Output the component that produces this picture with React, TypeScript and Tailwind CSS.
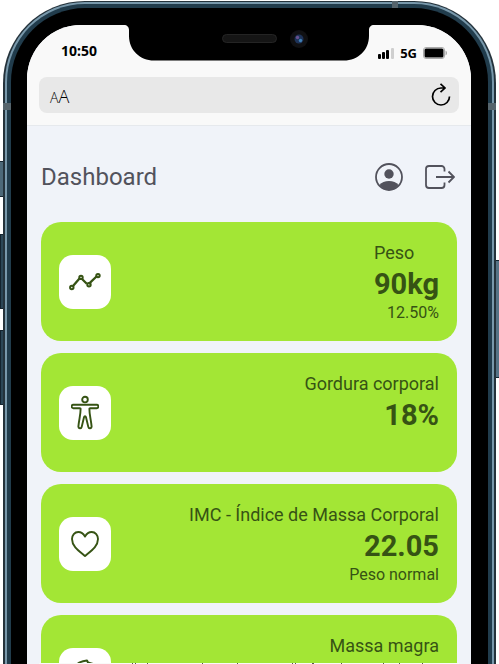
import type { ReactNode } from "react";

type Metric = { label: string; value: string; note?: string; icon: ReactNode };

const TrendIcon = () => (
  <svg viewBox="0 0 32 32" className="size-8" fill="none" stroke="currentColor" strokeWidth="2" aria-hidden="true">
    <path d="M4 20 10.500 12.500M12.500 12.500 17.800 17.800M19.800 17.800 28 10" strokeWidth="2.300" />
    <circle cx="2.800" cy="21.500" r="1.700" />
    <circle cx="12" cy="11.400" r="1.700" />
    <circle cx="20" cy="18.800" r="1.700" />
    <circle cx="29" cy="9.600" r="1.700" />
  </svg>
);

const BodyIcon = () => (
  <svg viewBox="0 0 28 36" className="h-9 w-7" fill="none" stroke="currentColor" strokeWidth="1.900" strokeLinejoin="round" aria-hidden="true">
    <circle cx="14" cy="4.600" r="2.800" />
    <path d="M2.300 9.800H25.700a1.600 1.600 0 0 1 0 3.400H19.200a.8.8 0 0 0-.8.9c0 6 1.500 10 2.200 17.200.2 2.400-2.900 2.700-3.300.6L15 22.300c-.4-1.600-1.600-1.600-2 0L10.700 31.900c-.4 2.100-3.500 1.800-3.300-.6C8.100 24.100 9.600 20.100 9.600 14.100a.8.8 0 0 0-.8-.9H2.300a1.600 1.600 0 0 1 0-3.400Z" />
  </svg>
);

const HeartIcon = () => (
  <svg viewBox="0 0 28 26" className="h-[26px] w-7" fill="none" stroke="currentColor" strokeWidth="1.900" strokeLinejoin="round" aria-hidden="true">
    <path d="M14 5.600C12.300 2.500 10 1 7.300 1 3.600 1 1 4.200 1 8c0 7.500 7 12 13 17 6-5 13-9.500 13-17 0-3.800-2.600-7-6.300-7C18 1 15.700 2.500 14 5.600Z" />
  </svg>
);

const MuscleIcon = () => (
  <svg viewBox="0 0 28 32" className="h-8 w-7" fill="none" stroke="currentColor" strokeWidth="2" strokeLinejoin="round" aria-hidden="true">
    <path d="M3 9C5 5 8 3 12 2.200L16 1.500 17 3.500 22 5 20 8 14 8l-1 5c8-3 15 1 14 8-1 8-14 9-22 5C2 21 1 15 3 9Z" />
  </svg>
);

const metrics: Metric[] = [
  { label: "Peso", value: "90kg", note: "12.50%", icon: <TrendIcon /> },
  { label: "Gordura corporal", value: "18%", icon: <BodyIcon /> },
  { label: "IMC - Índice de Massa Corporal", value: "22.05", note: "Peso normal", icon: <HeartIcon /> },
  { label: "Massa magra", value: "", icon: <MuscleIcon /> },
];

function MetricCard({ label, value, note, icon }: Metric) {
  return (
    <article className="flex h-[119px] shrink-0 justify-between rounded-[20px] bg-[#a3e635] px-[18px] text-[#365314]">
      <div className="flex h-[54px] w-[52px] items-center justify-center self-center rounded-[14px] bg-white">{icon}</div>
      <div className="flex flex-col pt-[19px]">
        <h2 className="text-lg leading-6">{label}</h2>
        <p className="text-right text-[29px] leading-[38px] font-bold">{value}</p>
        <p className="text-right text-base leading-5">{note}</p>
      </div>
    </article>
  );
}

function StatusBar() {
  return (
    <div className="flex h-[52px] items-center justify-between pr-6 pl-[34px] font-['Noto_Sans','Open_Sans',sans-serif] text-sm font-bold text-black">
      <time>10:50</time>
      <div className="flex items-center gap-1.5 pt-1">
        <svg viewBox="0 0 16 11" className="h-[11px] w-4" aria-hidden="true">
          <rect x="0" y="6" width="3" height="5" rx="1" />
          <rect x="4" y="4" width="3" height="7" rx="1" />
          <rect x="8" y="2" width="3" height="9" rx="1" />
          <rect x="13" y="0" width="3" height="11" rx="1" fill="#cfcfcf" />
        </svg>
        <span className="text-[13px]">5G</span>
        <svg viewBox="0 0 24 12" className="h-3 w-6" aria-hidden="true">
          <rect x=".5" y=".5" width="21" height="11" rx="2.500" fill="#fff" stroke="#aaa" />
          <rect x="1.500" y="1.500" width="19" height="9" rx="1.500" />
          <path d="M22.500 3.500c2 1 2 4 0 5Z" fill="#aaa" />
        </svg>
      </div>
    </div>
  );
}

function Notch() {
  return (
    <div className="absolute top-0 left-1/2 h-9 w-[250px] -translate-x-1/2">
      <svg viewBox="0 0 250 36" className="h-full w-full" aria-hidden="true">
        <path d="M0 0C3 0 5 2 5 5V11C5 25 16 35.500 30 35.500H220C234 35.500 245 25 245 11V5C245 2 247 0 250 0Z" />
        <rect x="98.500" y="9.500" width="54" height="8" rx="4" fill="#151515" stroke="#242424" />
        <circle cx="175" cy="14" r="9" fill="#101012" />
        <circle cx="175" cy="14" r="4.500" fill="#1e3359" />
        <circle cx="173.500" cy="12.500" r="1.700" fill="#68518f" />
        <circle cx="176.500" cy="15.500" r="1.700" fill="#3f7fb5" />
      </svg>
    </div>
  );
}

function AddressBar() {
  return (
    <div className="mx-3 flex h-9 items-center justify-between rounded-lg bg-[#e8e8e8] pr-2 pl-[11px]">
      <button aria-label="Tamanho do texto" className="flex items-baseline pt-1 font-['Open_Sans','Noto_Sans',sans-serif] text-black">
        <span className="text-sm leading-6 font-light">A</span>
        <span className="text-lg leading-6 font-light">A</span>
      </button>
      <button aria-label="Recarregar" className="text-black">
        <svg viewBox="0 0 20 24" className="h-6 w-5" fill="none" stroke="currentColor" strokeWidth="1.700" aria-hidden="true">
          <path d="M18.500 13.500A8.500 8.500 0 1 1 10 5H14M9.500 .800 14 5 9.500 9.200" />
        </svg>
      </button>
    </div>
  );
}

export default function App() {
  return (
    <div className="relative h-screen overflow-hidden bg-white px-[3px] pt-px font-[Roboto,sans-serif]">
      <span className="absolute top-[161px] left-0 h-9 w-1 border-y border-[#14242f] bg-[#4c6878]" />
      <span className="absolute top-[234px] left-0 h-[75px] w-1 border border-r-0 border-[#14242f] bg-[#2b4656]" />
      <span className="absolute top-[330px] left-0 h-[75px] w-1 border border-r-0 border-[#14242f] bg-[#2b4656]" />
      <span className="absolute top-[260px] right-0 h-[118px] w-1 border-y border-[#14242f] bg-[#567386]" />

      <div className="relative h-full rounded-t-[82px] bg-[#24323b] px-0.5 pt-px">
        <span className="absolute top-[102px] left-0 z-10 h-[7px] w-2 bg-[#56646c]" />
        <span className="absolute top-[102px] right-0 z-10 h-[7px] w-2 bg-[#56646c]" />
        <span className="absolute top-0 right-[98px] z-10 h-[7px] w-1.5 bg-[#56646c]" />
        <div className="h-full rounded-t-[80px] bg-[#7898ab] px-0.5 pt-0.5">
          <div className="h-full rounded-t-[78px] bg-[#213c4c] px-1 pt-1">
            <div className="h-full rounded-t-[74px] bg-black pt-[17px] pr-[17px] pl-4">
              <div className="relative flex h-full flex-col overflow-hidden rounded-t-[54px] bg-[#f0f3f9]">
                <header className="h-[101px] shrink-0 border-b border-[#e6e9ed] bg-[#f9f9f9]">
                  <StatusBar />
                  <AddressBar />
                </header>
                <Notch />

                <main className="flex flex-col px-3.5">
                  <div className="flex h-24 items-center justify-between pt-1.5 pr-0.5 text-zinc-600">
                    <h1 className="text-2xl leading-8">Dashboard</h1>
                    <div className="flex items-center gap-[22px]">
                      <button aria-label="Perfil">
                        <svg viewBox="0 0 28 28" className="size-7" aria-hidden="true">
                          <circle cx="14" cy="14" r="13" fill="none" stroke="currentColor" strokeWidth="1.800" />
                          <circle cx="14" cy="11" r="4.700" fill="currentColor" />
                          <path d="M4.500 22C6.500 19.300 10 18 14 18s7.500 1.300 9.500 4C21 25 18 27 14 27S7 25 4.500 22Z" fill="currentColor" />
                        </svg>
                      </button>
                      <button aria-label="Sair">
                        <svg viewBox="0 0 30 24" className="h-6 w-[30px]" fill="none" stroke="currentColor" strokeWidth="1.800" aria-hidden="true">
                          <path d="M19.500 6.500V4A3 3 0 0 0 16.500 1H4A3 3 0 0 0 1 4V20A3 3 0 0 0 4 23H16.500A3 3 0 0 0 19.500 20V17.500M11 12H29M23.500 6.500 29 12 23.500 17.500" />
                        </svg>
                      </button>
                    </div>
                  </div>
                  <section className="flex flex-col gap-3" aria-label="Medidas">
                    {metrics.map((m) => (
                      <MetricCard key={m.label} {...m} />
                    ))}
                  </section>
                </main>
                <div className="absolute inset-x-3 bottom-0 h-px bg-[#f9f9f9]">
                  <svg viewBox="0 0 420 1" className="h-px w-full" stroke="#555" aria-hidden="true">
                    <path d="M93 .5h1M96 .5h1M108 .5h1M163 .5h1M198 .5h1M253 .5h1M256 .5h1M273 .5h2M302 .5h1M344 .5h1M360 .5h1M383 .5h1" />
                  </svg>
                </div>
              </div>
            </div>
          </div>
        </div>
      </div>
    </div>
  );
}
